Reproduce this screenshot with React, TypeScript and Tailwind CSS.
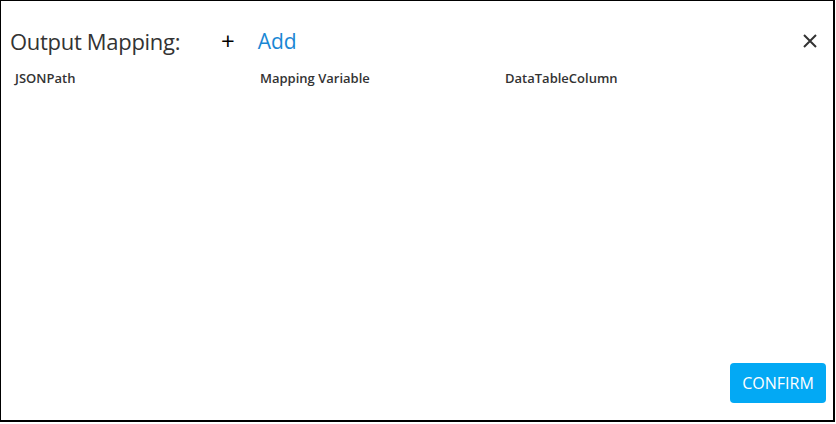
const App = () => {
  return (
    <div className="w-[836px] h-[424px] bg-white" style={{ fontFamily: '"Open Sans", "Noto Sans", sans-serif' }}>
      <div className="w-[835px] h-[422px] border-l border-t border-r-2 border-b-2 border-black flex flex-col">
        <div className="flex items-center h-[40px] mt-[20px] pl-[9px] pr-[16px]">
          <div className="w-[173px] whitespace-nowrap text-[22px] text-[#333] leading-[30px] tracking-[-0.3px]">
            Output Mapping:
          </div>
          <button className="ml-[38px] text-[24px] font-medium text-black leading-none">+</button>
          <button className="ml-[23px] text-[21px] text-[#1a87d4] leading-none">Add</button>
          <button className="ml-auto text-[#333]">
            <svg width="14" height="14" viewBox="0 0 14 14" stroke="currentColor" strokeWidth="2">
              <path d="M1 1 L13 13 M13 1 L1 13" />
            </svg>
          </button>
        </div>
        <div className="grid grid-cols-[245px_245px_245px] pl-[14px] mt-[8px] text-[13px] font-semibold text-[#333]">
          <div>JSONPath</div>
          <div>Mapping Variable</div>
          <div>DataTableColumn</div>
        </div>
        <div className="flex-1" />
        <div className="flex justify-end pr-[7px] pb-[17px]">
          <button className="w-[96px] h-[40px] rounded bg-[#03a9f4] text-white text-[16px]">CONFIRM</button>
        </div>
      </div>
    </div>
  );
};

export default App;
